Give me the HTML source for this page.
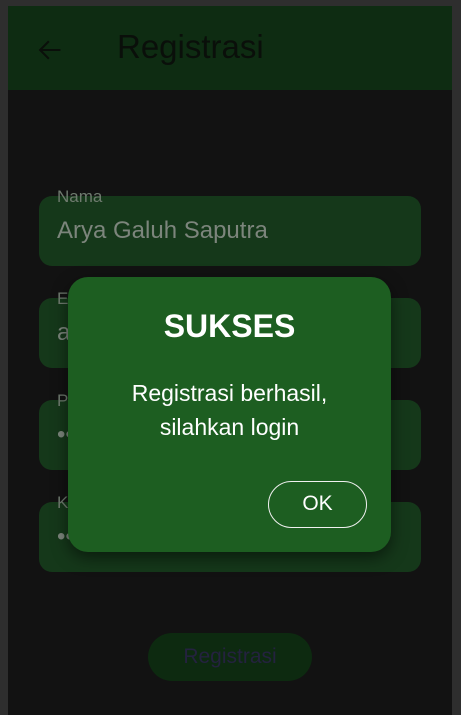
<!DOCTYPE html>
<html><head><style>
*{margin:0;padding:0;box-sizing:border-box}
body{width:461px;height:715px;background:#2e2e2e;position:relative;overflow:hidden;font-family:"Liberation Sans",sans-serif}
.scr{position:absolute;left:8px;top:6px;width:444px;height:709px;background:#121212}
.bar{position:absolute;left:0;top:0;width:444px;height:84px;background:#0e2c12}
.title{position:absolute;left:109px;top:22px;font-size:33px;color:#0a0f0a}
.f{position:absolute;left:31px;width:382px;height:70px;background:#15381a;border-radius:13px}
.lbl{position:absolute;left:49px;font-size:17px;color:#6e7a6e}
.val{position:absolute;left:49px;font-size:24px;color:#7c857c}
.dlg{position:absolute;left:68px;top:277px;width:323px;height:275px;background:#1d5e21;border-radius:20px;box-shadow:0 6px 16px rgba(0,0,0,.5);color:#fff;text-align:center}
.ok{position:absolute;left:200px;top:204px;width:99px;height:47px;border:1.5px solid #f0f0f0;border-radius:24px;font-size:21px;line-height:44px}
.btn{position:absolute;left:140px;top:627px;width:164px;height:48px;background:#0d2a10;border-radius:24px;color:#24223f;font-size:21px;text-align:center;line-height:48px}
</style></head><body>
<div class="scr">
<div class="bar">
<svg style="position:absolute;left:28px;top:30px" width="28" height="28" viewBox="0 0 24 24"><path d="M21 12H4M11 4.5L3.5 12l7.5 7.5" stroke="#0a0f0a" stroke-width="1.8" fill="none"/></svg>
<div class="title">Registrasi</div>
</div>
<div class="f" style="top:190px"></div>
<div class="f" style="top:292px"></div>
<div class="f" style="top:394px"></div>
<div class="f" style="top:496px"></div>
<div class="lbl" style="top:181px">Nama</div>
<div class="val" style="top:211px">Arya Galuh Saputra</div>
<div class="lbl" style="top:283px">E</div>
<div class="val" style="top:313px">a</div>
<div class="lbl" style="top:385px">P</div>
<div class="val" style="top:415px">••</div>
<div class="lbl" style="top:487px">K</div>
<div class="val" style="top:517px">••</div>
<div class="btn">Registrasi</div>
</div>
<div class="dlg">
<div style="position:absolute;left:0;right:0;top:31px;font-size:32px;font-weight:bold">SUKSES</div>
<div style="position:absolute;left:0;right:0;top:99px;font-size:23px;line-height:34px">Registrasi berhasil,<br>silahkan login</div>
<div class="ok">OK</div>
</div>
</body></html>
